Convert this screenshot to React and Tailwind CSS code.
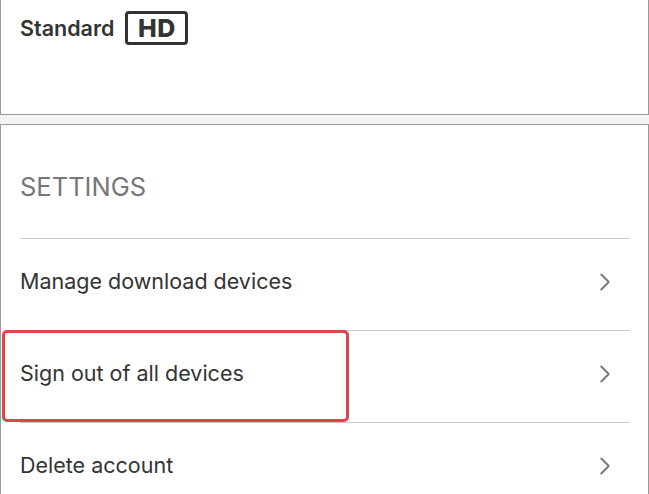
import { ChevronRight } from 'lucide-react';

const rows = ['Manage download devices', 'Sign out of all devices', 'Delete account'];

const App = () => {
  return (
    <div className="h-[494px] w-[649px] overflow-hidden bg-[#f3f3f3] font-['Inter',sans-serif] text-[#333]">
      <div className="h-[115px] border border-t-0 border-[#999] bg-white px-[19px] pt-[11px]">
        <div className="flex items-center gap-[11px]">
          <span className="text-[21.5px] font-semibold">Standard</span>
          <span className="flex h-[34px] w-[63px] items-center justify-center rounded-[4px] border-[3px] border-[#333] text-[25px] font-extrabold leading-none tracking-wide">
            HD
          </span>
        </div>
      </div>

      <div className="mt-[9px] h-[370px] border border-b-0 border-[#999] bg-white">
        <div className="px-[19px] pt-[47px] pb-[36px] text-[25.5px] font-normal leading-[30px] text-[#777]">
          SETTINGS
        </div>
        <div className="ml-[19px] mr-[18px]">
          {rows.map((label, i) => (
            <div key={label} className="relative flex h-[92px] items-center justify-between border-t border-[#ccc] pb-[5px]">
              {i === 1 && (
                <div className="absolute top-[-1px] left-[-18px] h-[92px] w-[347px] rounded-[5px] border-[3px] border-[#d9474b]" />
              )}
              <span className="text-[21.5px] leading-none">{label}</span>
              <ChevronRight className="mr-[10px] h-[30px] w-[30px] text-[#777]" strokeWidth={1.5} />
            </div>
          ))}
        </div>
      </div>
    </div>
  );
};

export default App;
